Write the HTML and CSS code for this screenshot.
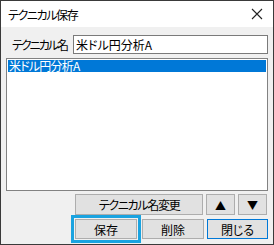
FILE: index.html
```html
<!DOCTYPE html>
<html lang="ja">
<head>
    <meta charset="UTF-8">
    <title>テクニカル保存</title>
    <link rel="stylesheet" href="styles.css">
</head>
<body>
    <div class="window">
        <div class="titlebar">
            <span class="title">テクニカル保存</span>
            <span class="close">
                <svg width="12" height="12" viewBox="0 0 12 12"><path d="M1 1L11 11M11 1L1 11" stroke="#222" stroke-width="1.1"/></svg>
            </span>
        </div>
        <div class="content">
            <div class="name-row">
                <label class="name-label" for="tech-name">テクニカル名</label>
                <input class="name-input" id="tech-name" type="text" value="米ドル円分析A">
            </div>
            <div class="listbox">
                <div class="item selected">米ドル円分析A</div>
            </div>
            <div class="tool-row">
                <button class="btn rename">テクニカル名変更</button>
                <button class="btn arrow">▲</button>
                <button class="btn arrow">▼</button>
            </div>
            <div class="action-row">
                <div class="focus-ring">
                    <button class="btn action">保存</button>
                </div>
                <button class="btn action delete">削除</button>
                <button class="btn action default">閉じる</button>
            </div>
        </div>
    </div>
</body>
</html>
```

FILE: styles.css
```css
body {
    margin: 0;
    font-family: "Noto Sans CJK JP", "Noto Sans", sans-serif;
    font-size: 12px;
    font-feature-settings: "palt";
    letter-spacing: -0.8px;
    color: #000;
}
.window {
    width: 274px;
    height: 245px;
    box-sizing: border-box;
    border: 1px solid #3a3a3a;
    background: #f0f0f0;
    display: flex;
    flex-direction: column;
}
.titlebar {
    height: 26px;
    background: #fff;
    display: flex;
    align-items: center;
    justify-content: space-between;
    padding: 0 10px 0 7px;
}
.title {
    white-space: nowrap;
    letter-spacing: -1.4px;
}
.close {
    display: flex;
}
.content {
    padding: 8px 5px 0 5px;
}
.name-row {
    display: flex;
    align-items: center;
    height: 19px;
    padding-left: 6px;
}
.name-label {
    flex: none;
    width: 61px;
    white-space: nowrap;
    letter-spacing: -2px;
}
.name-input {
    flex: 1;
    min-width: 0;
    height: 19px;
    box-sizing: border-box;
    border: 1px solid #7a7a7a;
    padding: 0 2px;
    font: inherit;
    margin: 0;
}
.listbox {
    margin-top: 4px;
    height: 133px;
    box-sizing: border-box;
    border: 1px solid #828282;
    background: #fff;
    padding: 1px;
}
.item {
    height: 12px;
    line-height: 12px;
    padding-left: 1px;
    white-space: nowrap;
}
.item.selected {
    background: #0078d7;
    color: #fff;
}
.tool-row {
    display: flex;
    justify-content: flex-end;
    gap: 3px;
    margin-top: 3px;
    padding-right: 1px;
}
.btn {
    font: inherit;
    background: #e1e1e1;
    border: 1px solid #adadad;
    margin: 0;
    padding: 0;
    height: 21px;
    color: #000;
    white-space: nowrap;
}
.rename {
    width: 128px;
    letter-spacing: -1.3px;
}
.arrow {
    width: 29px;
    font-size: 11px;
    letter-spacing: 0;
}
.action-row {
    display: flex;
    justify-content: flex-end;
    align-items: center;
}
.focus-ring {
    border: 3px solid #1aa3e0;
    padding: 1px;
    display: flex;
}
.action {
    width: 62px;
    height: 20px;
}
.delete {
    margin-left: 1px;
}
.default {
    width: 61px;
    margin-left: 3px;
    border-color: #0078d7;
}
```
